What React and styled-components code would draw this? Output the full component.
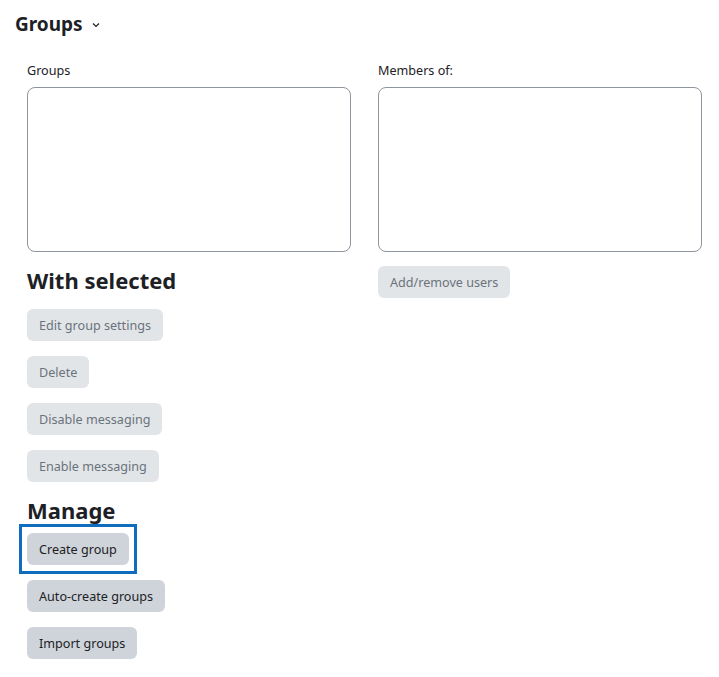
import React from "react";
import styled, { createGlobalStyle } from "styled-components";

const Global = createGlobalStyle`
  body {
    margin: 0;
    background: #fff;
    font-family: "Noto Sans", "Open Sans", sans-serif;
    color: #1d2125;
  }
`;

function GroupsPage() {
  return (
    <Page>
      <Global />
      <TitleRow>
        <h2>Groups</h2>
        <Chevron viewBox="0 0 10 10">
          <path d="M2 3.5 L5 6.5 L8 3.5" />
        </Chevron>
      </TitleRow>
      <Columns>
        <Column>
          <Label>Groups</Label>
          <ListBox />
          <Heading>With selected</Heading>
          <ButtonStack $top={15}>
            <Btn disabled>Edit group settings</Btn>
            <Btn disabled>Delete</Btn>
            <Btn disabled>Disable messaging</Btn>
            <Btn disabled>Enable messaging</Btn>
          </ButtonStack>
          <Heading>Manage</Heading>
          <ButtonStack $top={9}>
            <Btn $focused>Create group</Btn>
            <Btn>Auto-create groups</Btn>
            <Btn>Import groups</Btn>
          </ButtonStack>
        </Column>
        <Column>
          <Label>Members of:</Label>
          <ListBox />
          <ButtonStack $top={14}>
            <Btn disabled>Add/remove users</Btn>
          </ButtonStack>
        </Column>
      </Columns>
    </Page>
  );
}

const Page = styled.div`
  padding: 10px 18px 20px 15px;
`;

const TitleRow = styled.div`
  display: flex;
  align-items: center;
  gap: 8px;
  height: 28px;

  h2 {
    margin: 0;
    font-size: 19px;
    font-weight: 700;
    line-height: 28px;
  }
`;

const Chevron = styled.svg`
  width: 10px;
  height: 10px;
  margin-top: 2px;
  fill: none;
  stroke: #1d2125;
  stroke-width: 1.2;
`;

const Columns = styled.div`
  display: grid;
  grid-template-columns: 324px 324px;
  column-gap: 27px;
  padding-left: 12px;
  margin-top: 24px;
`;

const Column = styled.div`
  display: flex;
  flex-direction: column;
  align-items: flex-start;
`;

const Label = styled.div`
  font-size: 12.6px;
  line-height: 18px;
  margin-bottom: 7px;
`;

const ListBox = styled.div`
  width: 100%;
  height: 165px;
  box-sizing: border-box;
  border: 1px solid #8f959e;
  border-radius: 8px;
`;

const Heading = styled.h3`
  margin: 14px 0 0;
  font-size: 22px;
  font-weight: 700;
  line-height: 28px;
`;

const ButtonStack = styled.div`
  display: flex;
  flex-direction: column;
  align-items: flex-start;
  gap: 15px;
  margin-top: ${({ $top }) => $top}px;
`;

const Btn = styled.button`
  position: relative;
  height: 32px;
  padding: 0 12px;
  border: none;
  border-radius: 6px;
  font-family: "Noto Sans", "Open Sans", sans-serif;
  font-size: 12.6px;
  background: #ced4da;
  color: #1d2125;

  &::after {
    content: "";
    display: ${({ $focused }) => ($focused ? "block" : "none")};
    position: absolute;
    inset: -9px -8px -9px -8px;
    border: 3px solid #0f6cbf;
    pointer-events: none;
  }

  &:disabled {
    background: #e2e5e8;
    color: #6a737b;
  }
`;

export default GroupsPage;
